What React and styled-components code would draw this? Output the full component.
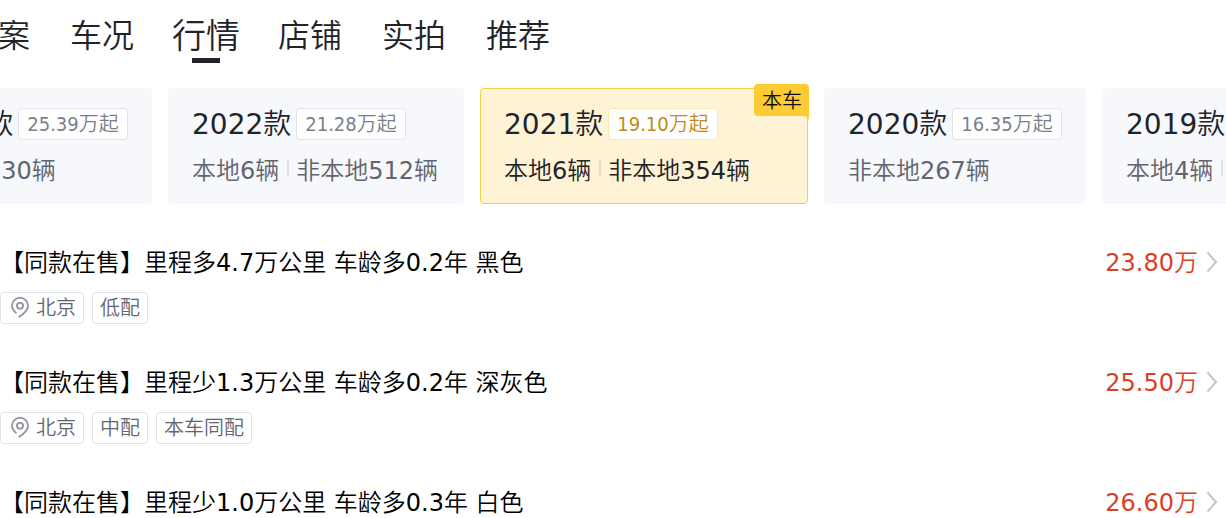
import React from "react";
import styled, { createGlobalStyle } from "styled-components";

const GlobalStyle = createGlobalStyle`
  *, *::before, *::after { box-sizing: border-box; }
  body {
    margin: 0;
    background: #fff;
    color: #000;
    font-family: "DejaVu Sans", "Noto Sans CJK SC DemiLight", "Noto Sans CJK SC", sans-serif;
    font-weight: 400;
  }
  button { font: inherit; border: 0; background: none; padding: 0; text-align: left; cursor: pointer; }
`;

const Page = styled.main`
  width: 100%;
  overflow: hidden;
`;

const TabBar = styled.nav`
  display: flex;
  gap: 40px;
  height: 72px;
  margin-left: -34px;
`;

const Tab = styled.button`
  position: relative;
  flex: none;
  height: 72px;
  margin: 0 ${(p) => (p.$active ? "-2px" : "0")};
  && { font-size: ${(p) => (p.$active ? "34px" : "32px")}; }
  line-height: 72px;
  color: #222329;

  &::after {
    content: "";
    display: ${(p) => (p.$active ? "block" : "none")};
    position: absolute;
    left: 50%;
    bottom: 9px;
    width: 28px;
    height: 5px;
    margin-left: -14px;
    background: #222329;
  }
`;

const YearStrip = styled.div`
  display: flex;
  gap: 16px;
  margin: 16px 0 0 -110px;
`;

const YearCard = styled.button`
  position: relative;
  display: flex;
  flex-direction: column;
  flex: none;
  gap: 16px;
  min-width: ${(p) => p.$min};
  && { padding: 19px 23px 17px; }
  && { border: 1px solid ${(p) => (p.$active ? "#edd248" : "#f6f8fc")}; }
  border-radius: 4px;
  && { background: ${(p) => (p.$active ? "#fff3d6" : "#f6f8fc")}; }
  color: ${(p) => (p.$active ? "#222329" : "#62656f")};
`;

const YearHead = styled.span`
  display: flex;
  align-items: flex-start;
  gap: 5px;
  height: 32px;
`;

const YearName = styled.span`
  font-size: 28px;
  line-height: 34px;
  color: #222329;
`;

const Tag = styled.span`
  display: inline-flex;
  align-items: center;
  gap: 6px;
  height: 32px;
  padding: 0 7px;
  border: 1px solid #e2e4ea;
  border-radius: 4px;
  background: #fff;
  font-size: 20px;
  line-height: 28px;
  color: #62656f;
`;

const PriceTag = styled(Tag)`
  padding: 0 8px;
  border-color: ${(p) => (p.$active ? "#fbe7b0" : "#e2e4ea")};
  font-family: "DejaVu Sans Condensed", "Noto Sans CJK SC DemiLight", "Noto Sans CJK SC", sans-serif;
  color: ${(p) => (p.$active ? "#c28a12" : "#7b7f8a")};
`;

const Counts = styled.span`
  display: flex;
  align-items: flex-start;
  font-size: 24px;
  line-height: 30px;
  white-space: nowrap;
`;

const Divider = styled.span`
  width: 2px;
  height: 16px;
  margin: 4px 7px 0 8px;
  background: ${(p) => (p.$active ? "#e3d9c3" : "#dfe1e8")};
`;

const Ribbon = styled.span`
  position: absolute;
  top: -5px;
  right: -2px;
  height: 32px;
  padding: 0 7px 0 8px;
  border-radius: 4px 4px 0 4px;
  background: #ffcb32;
  font-size: 20px;
  line-height: 34px;
  color: #111;
`;

const RibbonFold = styled.svg`
  position: absolute;
  top: 32px;
  right: 0;
  width: 6px;
  height: 6px;
`;

const Listings = styled.ul`
  display: flex;
  flex-direction: column;
  gap: 44px;
  list-style: none;
  margin: 44px 0 0;
  padding: 0;
`;

const Listing = styled.li`
  display: flex;
  justify-content: space-between;
  align-items: flex-start;
`;

const ListingTitle = styled.a`
  display: block;
  font-size: 24px;
  line-height: 30px;
  color: #000;
  text-decoration: none;
`;

const Tags = styled.div`
  display: flex;
  gap: 8px;
  margin-top: 14px;
`;

const Price = styled.div`
  display: flex;
  align-items: flex-start;
  gap: 8px;
  padding-right: 8px;
  font-size: 24px;
  line-height: 30px;
  color: #dc3f26;
`;

const Arrow = styled.svg`
  width: 12px;
  height: 28px;
`;

function PinIcon() {
  return (
    <svg width="22" height="24" viewBox="0 0 22 24" fill="none" stroke="#969aa6" strokeWidth="2">
      <path d="M8.500 17.300C5.500 14.800 4 12.500 4 9.800A8 8 0 0 1 20 9.800C20 13.800 16.500 17.500 10.800 21.200" />
      <circle cx="12" cy="9.800" r="3" />
    </svg>
  );
}

function Chevron() {
  return (
    <Arrow viewBox="0 0 12 28" fill="none" stroke="#c4c6ce" strokeWidth="2">
      <path d="M1.500 4.500L10 14L1.500 23.500" />
    </Arrow>
  );
}

const tabs = ["方案", "车况", "行情", "店铺", "实拍", "推荐"];

const years = [
  { name: "2023款", price: "25.39万起", counts: ["非本地130辆"], min: "262px" },
  { name: "2022款", price: "21.28万起", counts: ["本地6辆", "非本地512辆"], min: "296px" },
  { name: "2021款", price: "19.10万起", counts: ["本地6辆", "非本地354辆"], min: "328px", current: true },
  { name: "2020款", price: "16.35万起", counts: ["非本地267辆"], min: "262px" },
  { name: "2019款", price: "15.20万起", counts: ["本地4辆", "非本地203辆"], min: "296px" },
];

const listings = [
  { title: "【同款在售】里程多4.7万公里 车龄多0.2年 黑色", city: "北京", tags: ["低配"], price: "23.80万" },
  { title: "【同款在售】里程少1.3万公里 车龄多0.2年 深灰色", city: "北京", tags: ["中配", "本车同配"], price: "25.50万" },
  { title: "【同款在售】里程少1.0万公里 车龄多0.3年 白色", tags: [], price: "26.60万" },
];

export default function App() {
  return (
    <Page>
      <GlobalStyle />
      <TabBar>
        {tabs.map((t) => (
          <Tab key={t} $active={t === "行情"}>{t}</Tab>
        ))}
      </TabBar>
      <YearStrip>
        {years.map((y) => (
          <YearCard key={y.name} $active={y.current} $min={y.min}>
            <YearHead>
              <YearName>{y.name}</YearName>
              <PriceTag $active={y.current}>{y.price}</PriceTag>
            </YearHead>
            <Counts>
              {y.counts.map((c, i) => (
                <React.Fragment key={c}>
                  {i > 0 && <Divider $active={y.current} />}
                  <span>{c}</span>
                </React.Fragment>
              ))}
            </Counts>
            {y.current && (
              <Ribbon>
                本车
                <RibbonFold viewBox="0 0 6 6">
                  <path d="M0 0H6V6C6 2 4 0 0 0Z" fill="#ffcb32" />
                </RibbonFold>
              </Ribbon>
            )}
          </YearCard>
        ))}
      </YearStrip>
      <Listings>
        {listings.map((l) => (
          <Listing key={l.title}>
            <div>
              <ListingTitle href="#">{l.title}</ListingTitle>
              {l.city && (
                <Tags>
                  <Tag>
                    <PinIcon />
                    {l.city}
                  </Tag>
                  {l.tags.map((t) => (
                    <Tag key={t}>{t}</Tag>
                  ))}
                </Tags>
              )}
            </div>
            <Price>
              <span>{l.price}</span>
              <Chevron />
            </Price>
          </Listing>
        ))}
      </Listings>
    </Page>
  );
}
